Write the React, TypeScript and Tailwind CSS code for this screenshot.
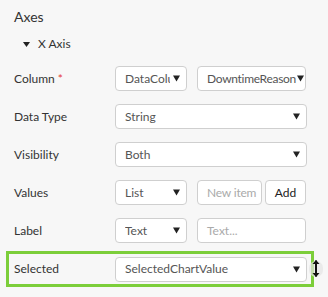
const font = { fontFamily: 'Lato, "Open Sans", "Liberation Sans", sans-serif' }

function Caret() {
  return (
    <svg width="7" height="7" viewBox="0 0 7 7" className="shrink-0">
      <path d="M0 0.5h7L3.5 6.5z" fill="#222" />
    </svg>
  )
}

function Select({ value, className = '' }: { value: string; className?: string }) {
  return (
    <div
      className={`h-[25px] bg-white border border-[#cfcfcf] rounded-[4px] flex items-center pl-[9px] pr-[6px] text-[12px] text-[#555] ${className}`}
    >
      <span className="flex-1 whitespace-nowrap overflow-hidden mr-[3px]">{value}</span>
      <Caret />
    </div>
  )
}

function Input({ placeholder, className = '' }: { placeholder: string; className?: string }) {
  return (
    <div
      className={`h-[25px] bg-white border border-[#cfcfcf] rounded-[4px] flex items-center pl-[9px] text-[12px] text-[#aaa] whitespace-nowrap overflow-hidden ${className}`}
    >
      {placeholder}
    </div>
  )
}

function Row({ label, children, required }: { label: string; children: React.ReactNode; required?: boolean }) {
  return (
    <div className="flex items-center h-[25px]">
      <div className="w-[101px] shrink-0 text-[12px] text-[#333]">
        {label}
        {required && <span className="text-[#e53935] ml-[3px]">*</span>}
      </div>
      <div className="flex gap-[10px] w-[192px]">{children}</div>
    </div>
  )
}

export default function App() {
  return (
    <div className="w-[328px] h-[297px] bg-[#f7f7f7] overflow-hidden relative" style={font}>
      <div className="pl-[14px] pt-[7px]">
        <div className="text-[14px] text-[#333] leading-[20px]">Axes</div>
        <div className="flex items-center gap-[8px] pl-[9px] mt-[9px] text-[12px] text-[#333] leading-[16px]">
          <svg width="7" height="5" viewBox="0 0 7 5">
            <path d="M0 0h7L3.5 5z" fill="#222" />
          </svg>
          X Axis
        </div>

        <div className="flex flex-col gap-[13px] mt-[14px]">
          <Row label="Column" required>
            <Select value="DataColumn" className="w-[72px]" />
            {/* this one's caret sits right after the text */}
            <div className="w-[109px] h-[25px] bg-white border border-[#cfcfcf] rounded-[4px] flex items-center pl-[9px] text-[12px] text-[#555] tracking-[-0.3px] whitespace-nowrap overflow-hidden">
              DowntimeReason
              <span className="ml-[1px] flex">
                <Caret />
              </span>
            </div>
          </Row>
          <Row label="Data Type">
            <Select value="String" className="w-[192px]" />
          </Row>
          <Row label="Visibility">
            <Select value="Both" className="w-[192px]" />
          </Row>
          <Row label="Values">
            <Select value="List" className="w-[72px]" />
            <div className="flex gap-[3px]">
              <Input placeholder="New item" className="w-[65px] pl-[8px] text-[11.5px] tracking-[-0.2px]" />
              <div className="w-[41px] h-[25px] bg-white border border-[#cfcfcf] rounded-[4px] flex items-center justify-center text-[12px] text-[#222]">
                Add
              </div>
            </div>
          </Row>
          <Row label="Label">
            <Select value="Text" className="w-[72px]" />
            <Input placeholder="Text..." className="w-[109px]" />
          </Row>
        </div>
      </div>

      <div className="ml-[6px] mt-[8px] w-[308px] h-[36px] border-[3px] border-[#7cce3a] flex items-center pl-[5px]">
        <div className="w-[101px] shrink-0 text-[12px] text-[#333]">Selected</div>
        <Select value="SelectedChartValue" className="w-[192px]" />
      </div>

      <div className="absolute left-[309px] top-[261px] w-[14px] h-[16px] rounded-full bg-[#e4e4e4] opacity-70" />
      <div className="absolute left-[310px] top-[259px]">
        <svg width="12" height="19" viewBox="0 0 12 19">
          <path d="M6 1.5v16" stroke="#111" strokeWidth="2" />
          <path d="M2.5 5L6 1l3.5 4z M2.5 14L6 18l3.5-4z" fill="#111" />
        </svg>
      </div>
    </div>
  )
}
